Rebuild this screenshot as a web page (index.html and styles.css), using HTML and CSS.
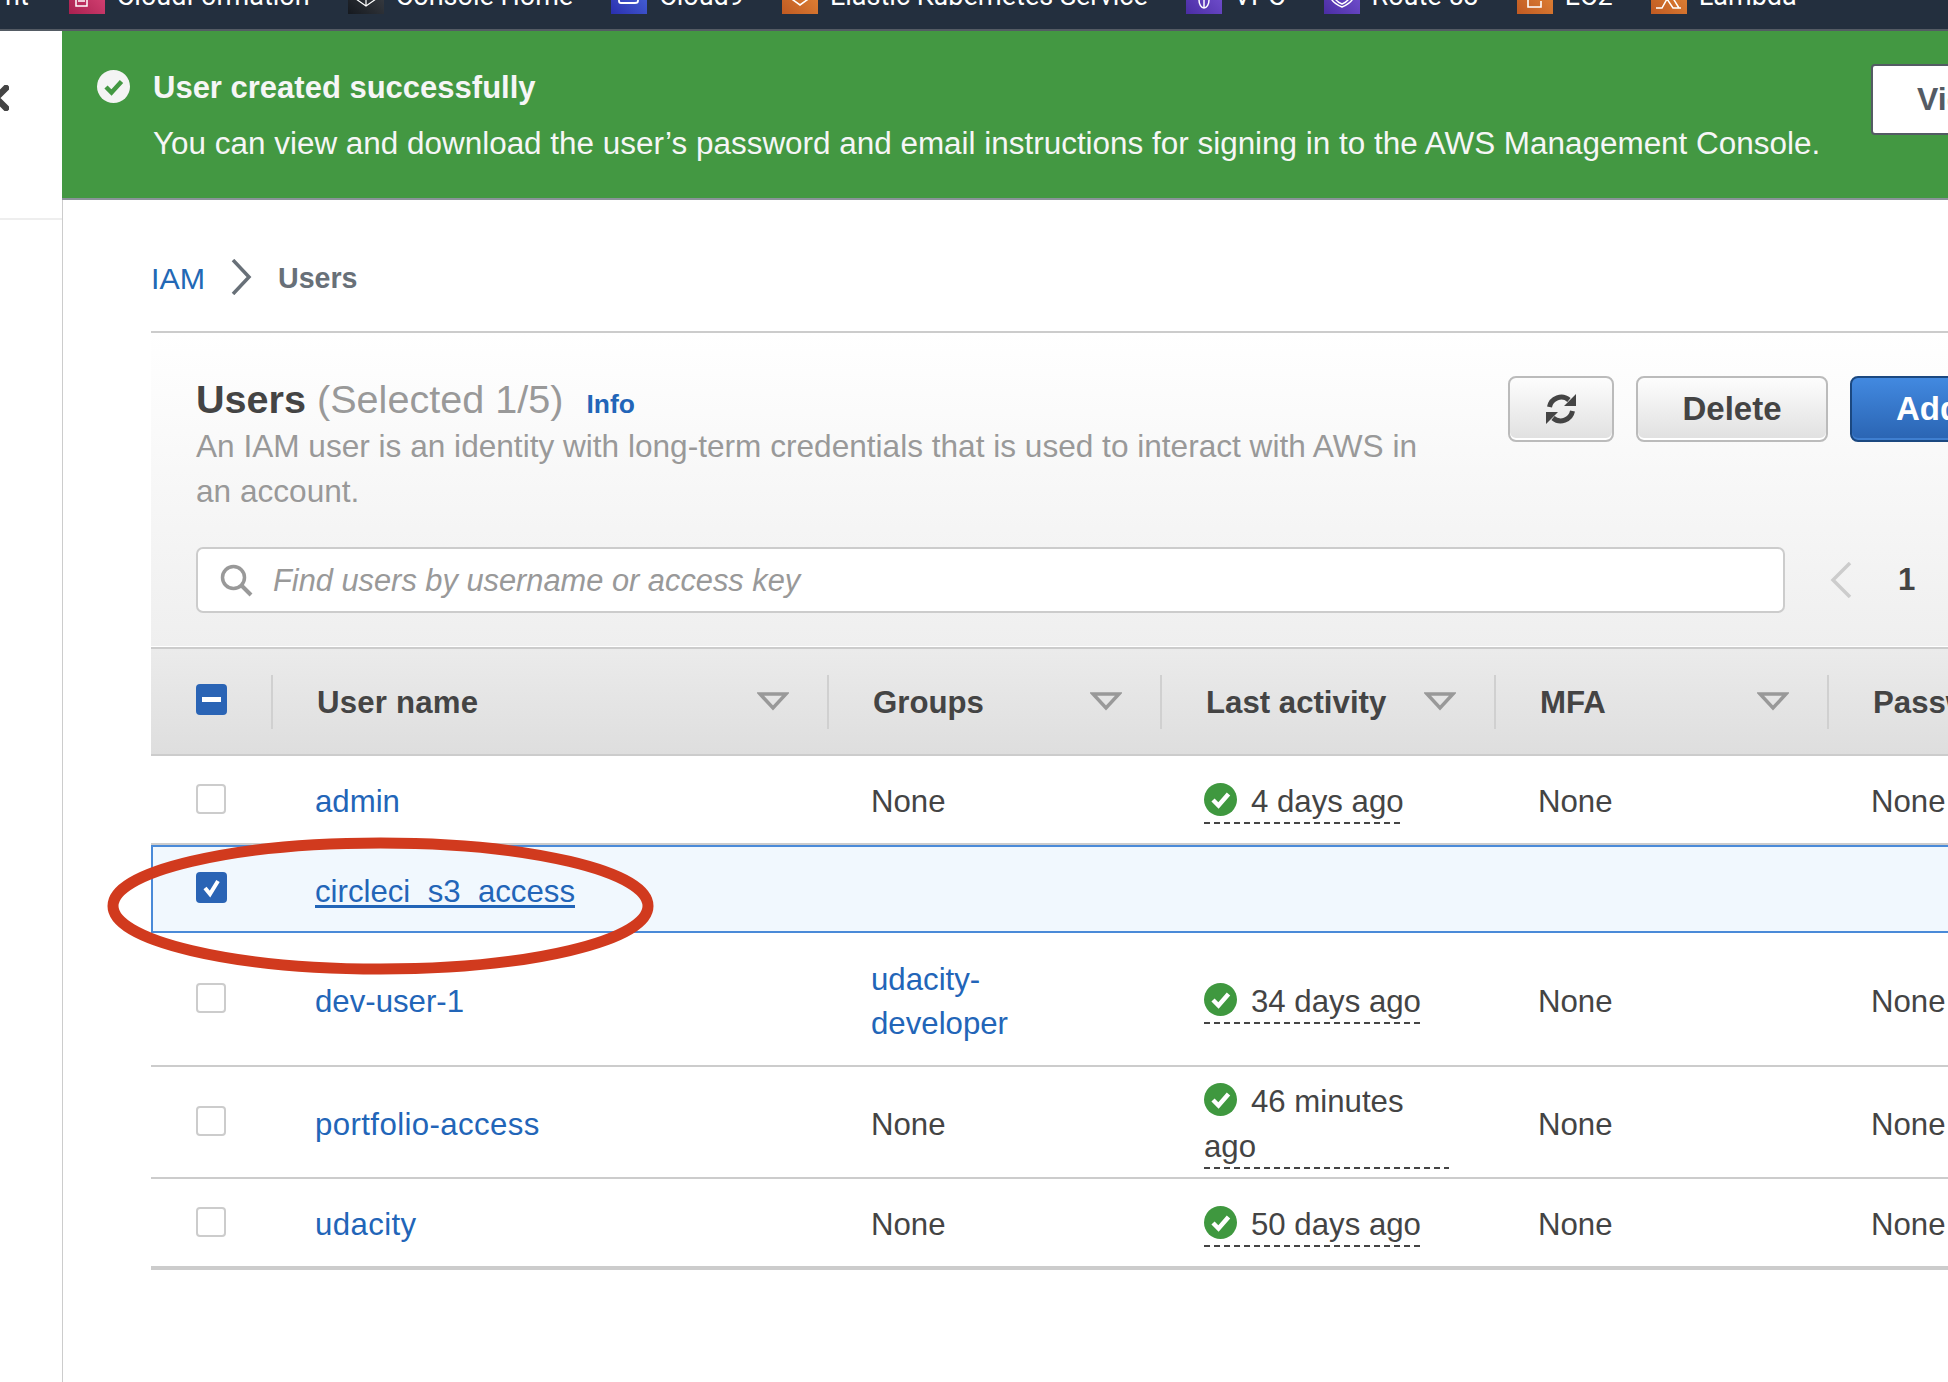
FILE: index.html
```html
<!DOCTYPE html>
<html lang="en">
<head>
<meta charset="utf-8">
<title>IAM Users</title>
<link rel="stylesheet" href="styles.css">
</head>
<body>
<nav class="topnav">
  <div class="nav-track">
    <span class="nav-text nav-first">nt</span>
    <span class="nav-item"><svg class="nav-icon" viewBox="0 0 36 36"><defs><linearGradient id="gp" x1="0" y1="1" x2="1" y2="0"><stop offset="0" stop-color="#a8204f"/><stop offset="1" stop-color="#e24c7e"/></linearGradient></defs><rect width="36" height="36" fill="url(#gp)"/><rect x="7" y="15" width="11" height="13" fill="none" stroke="#fff" stroke-width="1.5"/><path d="M9 23h7" stroke="#fff" stroke-width="1.5"/></svg><span class="nav-text">CloudFormation</span></span>
    <span class="nav-item"><svg class="nav-icon" viewBox="0 0 36 36"><defs><linearGradient id="gd" x1="0" y1="1" x2="1" y2="0"><stop offset="0" stop-color="#15191f"/><stop offset="1" stop-color="#42464c"/></linearGradient></defs><rect width="36" height="36" fill="url(#gd)"/><path d="M8 21l10 7 10-7M18 20v8" fill="none" stroke="#fff" stroke-width="1.2"/></svg><span class="nav-text">Console Home</span></span>
    <span class="nav-item"><svg class="nav-icon" viewBox="0 0 36 36"><defs><linearGradient id="gb" x1="0" y1="1" x2="1" y2="0"><stop offset="0" stop-color="#2a2fae"/><stop offset="1" stop-color="#4c6fe0"/></linearGradient></defs><rect width="36" height="36" fill="url(#gb)"/><path d="M8 17v6q0 2 2 2h14q3 0 3-2v-6" fill="none" stroke="#fff" stroke-width="1.8"/></svg><span class="nav-text">Cloud9</span></span>
    <span class="nav-item"><svg class="nav-icon" viewBox="0 0 36 36"><defs><linearGradient id="go" x1="0" y1="1" x2="1" y2="0"><stop offset="0" stop-color="#c05a22"/><stop offset="1" stop-color="#e78c3a"/></linearGradient></defs><rect width="36" height="36" fill="url(#go)"/><path d="M7 19l11 8 11-8M10 15l8 6 8-6" fill="none" stroke="#fff" stroke-width="1.6"/></svg><span class="nav-text">Elastic Kubernetes Service</span></span>
    <span class="nav-item"><svg class="nav-icon" viewBox="0 0 36 36"><defs><linearGradient id="gv" x1="0" y1="1" x2="1" y2="0"><stop offset="0" stop-color="#4a2da3"/><stop offset="1" stop-color="#7c58da"/></linearGradient></defs><rect width="36" height="36" fill="url(#gv)"/><ellipse cx="18" cy="22" rx="5" ry="8" fill="none" stroke="#fff" stroke-width="1.5"/><path d="M18 14v16" stroke="#fff" stroke-width="1.5"/></svg><span class="nav-text">VPC</span></span>
    <span class="nav-item"><svg class="nav-icon" viewBox="0 0 36 36"><rect width="36" height="36" fill="url(#gv)"/><path d="M6 16q0 8 12 13q12-5 12-13M10 18q1 5 8 8q7-3 8-8" fill="none" stroke="#fff" stroke-width="1.5"/></svg><span class="nav-text">Route 53</span></span>
    <span class="nav-item"><svg class="nav-icon" viewBox="0 0 36 36"><rect width="36" height="36" fill="url(#go)"/><path d="M11 18v11h13v-6M16 18h5M24 18v2M28 18v2" fill="none" stroke="#fff" stroke-width="1.6"/></svg><span class="nav-text">EC2</span></span>
    <span class="nav-item"><svg class="nav-icon" viewBox="0 0 36 36"><rect width="36" height="36" fill="url(#go)"/><path d="M5 30h6l5-9 6 9h8M14 17l2 4M20 17l8 13" fill="none" stroke="#fff" stroke-width="1.5"/></svg><span class="nav-text">Lambda</span></span>
  </div>
</nav>

<div class="shell">
  <aside class="sidebar">
    <svg class="side-close" viewBox="0 0 9 26"><path d="M6 3L-4 13L6 23" fill="none" stroke="#444" stroke-width="6.500" stroke-linecap="round" stroke-linejoin="round"/></svg>
  </aside>

  <main class="main">
    <section class="banner">
      <svg class="banner-icon" viewBox="0 0 33 33"><circle cx="16.5" cy="16.5" r="16.5" fill="#f4f4f4"/><path d="M9 17l5.5 5.5L24.500 11.500" fill="none" stroke="#439842" stroke-width="4.500"/></svg>
      <div class="banner-text">
        <div class="banner-title">User created successfully</div>
        <div class="banner-body">You can view and download the user’s password and email instructions for signing in to the AWS Management Console.</div>
      </div>
      <button class="banner-btn">View</button>
    </section>

    <div class="content">
      <div class="breadcrumb">
        <a class="crumb-link">IAM</a>
        <svg class="crumb-sep" viewBox="0 0 22 36"><path d="M3 1l16 17L3 35" fill="none" stroke="#687078" stroke-width="3.500"/></svg>
        <span class="crumb-current">Users</span>
      </div>

      <section class="panel">
        <header class="panel-head">
          <div class="head-top">
            <div class="head-info">
              <h1 class="title"><b>Users</b> <span class="title-count">(Selected 1/5)</span><a class="info-link">Info</a></h1>
              <p class="desc">An IAM user is an identity with long-term credentials that is used to interact with AWS in an account.</p>
            </div>
            <div class="actions">
              <button class="btn btn-icon"><svg class="refresh" viewBox="0 0 32 32"><path d="M4.500 14A12 12 0 0 1 24 7M27.500 18A12 12 0 0 1 8 25" fill="none" stroke="#444" stroke-width="5"/><path d="M31 1v12H19zM1 31V19h12z" fill="#444"/></svg></button>
              <button class="btn btn-delete">Delete</button>
              <button class="btn btn-primary">Add users</button>
            </div>
          </div>
          <div class="head-search">
            <div class="search">
              <svg class="search-icon" viewBox="0 0 33 33"><circle cx="13.500" cy="13.500" r="11" fill="none" stroke="#999" stroke-width="3.500"/><path d="M21.500 21.500L31 31" stroke="#999" stroke-width="4"/></svg>
              <span class="placeholder">Find users by username or access key</span>
            </div>
            <svg class="page-prev" viewBox="0 0 22 36"><path d="M20 1L3 18l17 17" fill="none" stroke="#ccc" stroke-width="3.500"/></svg>
            <span class="page-num">1</span>
          </div>
        </header>

        <div class="thead">
          <div class="th-check"><span class="cb cb-on"><svg viewBox="0 0 31 31"><path d="M6 15.500h19" stroke="#fff" stroke-width="5"/></svg></span></div>
          <div class="th"><span class="th-label th-wide">User name</span><svg class="sort" viewBox="0 0 32 19"><path d="M3 2h26L16 16z" fill="none" stroke="#999" stroke-width="3.500"/></svg></div>
          <div class="th"><span class="th-label">Groups</span><svg class="sort" viewBox="0 0 32 19"><path d="M3 2h26L16 16z" fill="none" stroke="#999" stroke-width="3.500"/></svg></div>
          <div class="th"><span class="th-label">Last activity</span><svg class="sort" viewBox="0 0 32 19"><path d="M3 2h26L16 16z" fill="none" stroke="#999" stroke-width="3.500"/></svg></div>
          <div class="th"><span class="th-label">MFA</span><svg class="sort" viewBox="0 0 32 19"><path d="M3 2h26L16 16z" fill="none" stroke="#999" stroke-width="3.500"/></svg></div>
          <div class="th"><span class="th-label th-clip">Password age</span></div>
        </div>

        <div class="row">
          <div class="td-check"><span class="cb"></span></div>
          <div class="td"><a class="link">admin</a></div>
          <div class="td">None</div>
          <div class="td"><span class="status"><svg class="ok" viewBox="0 0 33 33"><circle cx="16.500" cy="16.500" r="16.500" fill="#3f983f"/><path d="M9 17l5.500 5.500L24.500 11" fill="none" stroke="#fff" stroke-width="4.500"/></svg>4 days ago</span></div>
          <div class="td">None</div>
          <div class="td">None</div>
        </div>

        <div class="row row-selected">
          <div class="td-check"><span class="cb cb-on"><svg viewBox="0 0 31 31"><path d="M9 16l5 6 8-13" fill="none" stroke="#fff" stroke-width="4"/></svg></span></div>
          <div class="td"><a class="link link-under">circleci_s3_access</a></div>
          <div class="td"></div>
          <div class="td"></div>
          <div class="td"></div>
          <div class="td"></div>
        </div>

        <div class="row">
          <div class="td-check"><span class="cb"></span></div>
          <div class="td"><a class="link">dev-user-1</a></div>
          <div class="td td-groups"><a class="link">udacity-<br>developer</a></div>
          <div class="td"><span class="status"><svg class="ok" viewBox="0 0 33 33"><circle cx="16.500" cy="16.500" r="16.500" fill="#3f983f"/><path d="M9 17l5.500 5.500L24.500 11" fill="none" stroke="#fff" stroke-width="4.500"/></svg>34 days ago</span></div>
          <div class="td">None</div>
          <div class="td">None</div>
        </div>

        <div class="row">
          <div class="td-check"><span class="cb"></span></div>
          <div class="td"><a class="link link-wide">portfolio-access</a></div>
          <div class="td">None</div>
          <div class="td td-tight"><span class="status status-wrap"><svg class="ok" viewBox="0 0 33 33"><circle cx="16.500" cy="16.500" r="16.500" fill="#3f983f"/><path d="M9 17l5.500 5.500L24.500 11" fill="none" stroke="#fff" stroke-width="4.500"/></svg>46 minutes ago</span></div>
          <div class="td">None</div>
          <div class="td">None</div>
        </div>

        <div class="row row-last">
          <div class="td-check"><span class="cb"></span></div>
          <div class="td"><a class="link link-wide">udacity</a></div>
          <div class="td">None</div>
          <div class="td"><span class="status"><svg class="ok" viewBox="0 0 33 33"><circle cx="16.500" cy="16.500" r="16.500" fill="#3f983f"/><path d="M9 17l5.500 5.500L24.500 11" fill="none" stroke="#fff" stroke-width="4.500"/></svg>50 days ago</span></div>
          <div class="td">None</div>
          <div class="td">None</div>
        </div>
      </section>
    </div>
  </main>
</div>

<svg class="annotation" viewBox="0 0 560 155"><ellipse cx="280.500" cy="76" rx="267.500" ry="63" fill="none" stroke="#d13a1e" stroke-width="11"/></svg>
</body>
</html>
```

FILE: styles.css
```css
* { box-sizing: border-box; }

html, body {
  margin: 0;
  width: 1948px;
  height: 1382px;
  overflow: hidden;
}

body {
  position: relative;
  background: #fff;
  color: #444;
  font-family: "Liberation Sans", Arial, sans-serif;
  font-size: 31.2px;
  line-height: 44px;
}

/* top navigation, cropped by the top edge */
.topnav {
  height: 31px;
  background: #232f3e;
  border-bottom: 2px solid #545b64;
  overflow: hidden;
}

.nav-track {
  display: flex;
  gap: 38px;
  margin-top: -22px;
  height: 36px;
  white-space: nowrap;
}

.nav-item {
  display: flex;
  gap: 12px;
}

.nav-icon {
  width: 36px;
  height: 36px;
  flex: none;
}

.nav-text {
  color: #fff;
  font-family: Roboto, "Liberation Sans", sans-serif;
  font-size: 27px;
  line-height: 36px;
}

.nav-first {
  margin: 0 2px 0 5px;
}

/* shell */
.shell {
  display: flex;
  height: 1351px;
}

.sidebar {
  flex: 0 0 62px;
  height: 189px;
  padding-top: 54px;
  border-bottom: 2px solid #eee;
}

.side-close {
  display: block;
  width: 9px;
  height: 26px;
}

.main {
  flex: 1;
  min-width: 0;
  display: flex;
  flex-direction: column;
}

/* banner */
.banner {
  display: flex;
  align-items: flex-start;
  height: 169px;
  padding: 35px 0 0 35px;
  background: #439842;
  border-bottom: 2px solid #8a9399;
  color: #f6f6f6;
}

.banner-icon {
  flex: none;
  width: 33px;
  height: 33px;
  margin: 4px 23px 0 0;
}

.banner-text {
  flex: 0 0 1718px;
}

.banner-title {
  font-size: 31px;
  font-weight: 700;
  margin-bottom: 12px;
}

.banner-body {
  font-size: 31.45px;
}

.banner-btn {
  flex: none;
  width: 200px;
  height: 71px;
  margin-top: -2px;
  padding: 0 0 0 44px;
  text-align: left;
  background: #fff;
  border: 2px solid #545b64;
  border-radius: 4px;
  color: #545b64;
  font: 700 32px "Liberation Sans", Arial, sans-serif;
}

/* content */
.content {
  flex: 1;
  padding-left: 88px;
  border-left: 1px solid #ccc;
}

.breadcrumb {
  display: flex;
  align-items: center;
  height: 133px;
  padding-top: 24px;
  border-bottom: 2px solid #ccc;
  font-size: 28.6px;
}

.crumb-link {
  font-size: 30.4px;
  color: #2368b5;
}

.crumb-sep {
  width: 22px;
  height: 36px;
  margin: -2px 26px 0 25px;
}

.crumb-current {
  font-weight: 700;
  color: #687078;
}

/* panel */
.panel-head {
  height: 314px;
  padding: 42px 0 0 45px;
  background: linear-gradient(#fff, #efefef);
  border-bottom: 1px solid #fff;
}

.head-top {
  display: flex;
  align-items: flex-start;
  height: 139px;
}

.head-info {
  flex: 0 0 1312px;
}

.title {
  margin: 0 0 -4px;
  font-size: 39.6px;
  font-weight: 400;
  line-height: 48px;
  color: #999;
}

.title b {
  color: #444;
}

.info-link {
  margin-left: 23px;
  font-size: 26.4px;
  font-weight: 700;
  color: #2265b8;
}

.desc {
  margin: 0;
  max-width: 1250px;
  font-size: 31.6px;
  line-height: 45px;
  color: #999;
}

.actions {
  display: flex;
  gap: 22px;
  margin-top: 1px;
  white-space: nowrap;
}

.btn {
  height: 66px;
  padding: 0;
  border: 2px solid #bbb;
  border-radius: 8px;
  background: linear-gradient(#fdfdfd, #e0e0e0);
  box-shadow: inset 0 -2px 0 #fff;
  color: #444;
  font: 700 33px "Liberation Sans", Arial, sans-serif;
}

.btn-icon {
  display: flex;
  align-items: center;
  justify-content: center;
  width: 106px;
}

.refresh {
  width: 32px;
  height: 32px;
}

.btn-delete {
  width: 192px;
}

.btn-primary {
  flex: none;
  width: 240px;
  padding-left: 44px;
  text-align: left;
  border-color: #1b4880;
  background: linear-gradient(#4289e0, #2a64b2);
  box-shadow: inset 0 -2px 0 #3f7fd0;
  color: #fff;
}

.head-search {
  display: flex;
  align-items: center;
  margin-top: 33px;
}

.search {
  flex: none;
  display: flex;
  align-items: center;
  gap: 20px;
  width: 1589px;
  height: 66px;
  padding-left: 22px;
  background: #fff;
  border: 2px solid #ccc;
  border-radius: 7px;
}

.search-icon {
  flex: none;
  width: 33px;
  height: 33px;
}

.placeholder {
  font-style: italic;
  font-size: 30.8px;
  padding-top: 2px;
  color: #999;
}

.page-prev {
  flex: none;
  width: 22px;
  height: 36px;
  margin-left: 45px;
}

.page-num {
  margin-left: 46px;
  font-weight: 700;
}

/* table */
.thead,
.row {
  display: grid;
  grid-template-columns: 120px 556px 333px 334px 333px 1fr;
  align-items: center;
}

.thead {
  height: 109px;
  border-top: 2px solid #ccc;
  border-bottom: 2px solid #ccc;
  background: linear-gradient(#ebebeb, #dedede);
}

.th-check,
.td-check {
  padding-left: 45px;
}

.th-check {
  padding-bottom: 5px;
}

.td-check {
  padding-bottom: 2px;
}

.th {
  display: flex;
  align-items: center;
  justify-content: space-between;
  height: 54px;
  padding: 0 38px 0 44px;
  border-left: 2px solid #d0d0d0;
}

.th-label {
  padding-top: 3px;
  font-weight: 700;
  white-space: nowrap;
}

.th-wide {
  letter-spacing: 0.2px;
}

.th-clip {
  flex: none;
}

.sort {
  flex: none;
  width: 32px;
  height: 19px;
}

.cb {
  display: block;
  width: 30px;
  height: 30px;
  background: #fff;
  border: 2px solid #ccc;
  border-radius: 4px;
}

.cb-on {
  width: 31px;
  height: 31px;
  background: #2a64b5;
  border: 0;
}

.cb svg {
  display: block;
  width: 31px;
  height: 31px;
}

.row {
  border-bottom: 2px solid #ccc;
}

.td {
  padding: 24px 0 19px 44px;
  white-space: normal;
}

.td-groups {
  padding-top: 25px;
}

.td-tight {
  padding-top: 12px;
  padding-bottom: 8px;
}

.link {
  color: #2265b8;
}

.link-under {
  text-decoration: underline;
  text-underline-offset: 3px;
}

.link-wide {
  letter-spacing: 0.4px;
}

.row-selected {
  margin-right: -4px;
  background: #f1f8fe;
  border-bottom: 0;
  padding-top: 1px;
  box-shadow: inset 0 0 0 2px #4a8ad8;
}

.row-selected .td-check {
  padding-bottom: 4px;
}

.row-last {
  border-bottom-width: 4px;
}

.status {
  display: inline-block;
  max-width: 245px;
  vertical-align: top;
  background: repeating-linear-gradient(90deg, #444 0 6px, transparent 6px 10px) left bottom / 100% 2px no-repeat;
}

.status-wrap {
  line-height: 45px;
}

.ok {
  width: 33px;
  height: 33px;
  margin-right: 14px;
  vertical-align: -4px;
}

/* hand-drawn annotation over the table */
.annotation {
  position: absolute;
  left: 100px;
  top: 830px;
  width: 560px;
  height: 155px;
}
```
